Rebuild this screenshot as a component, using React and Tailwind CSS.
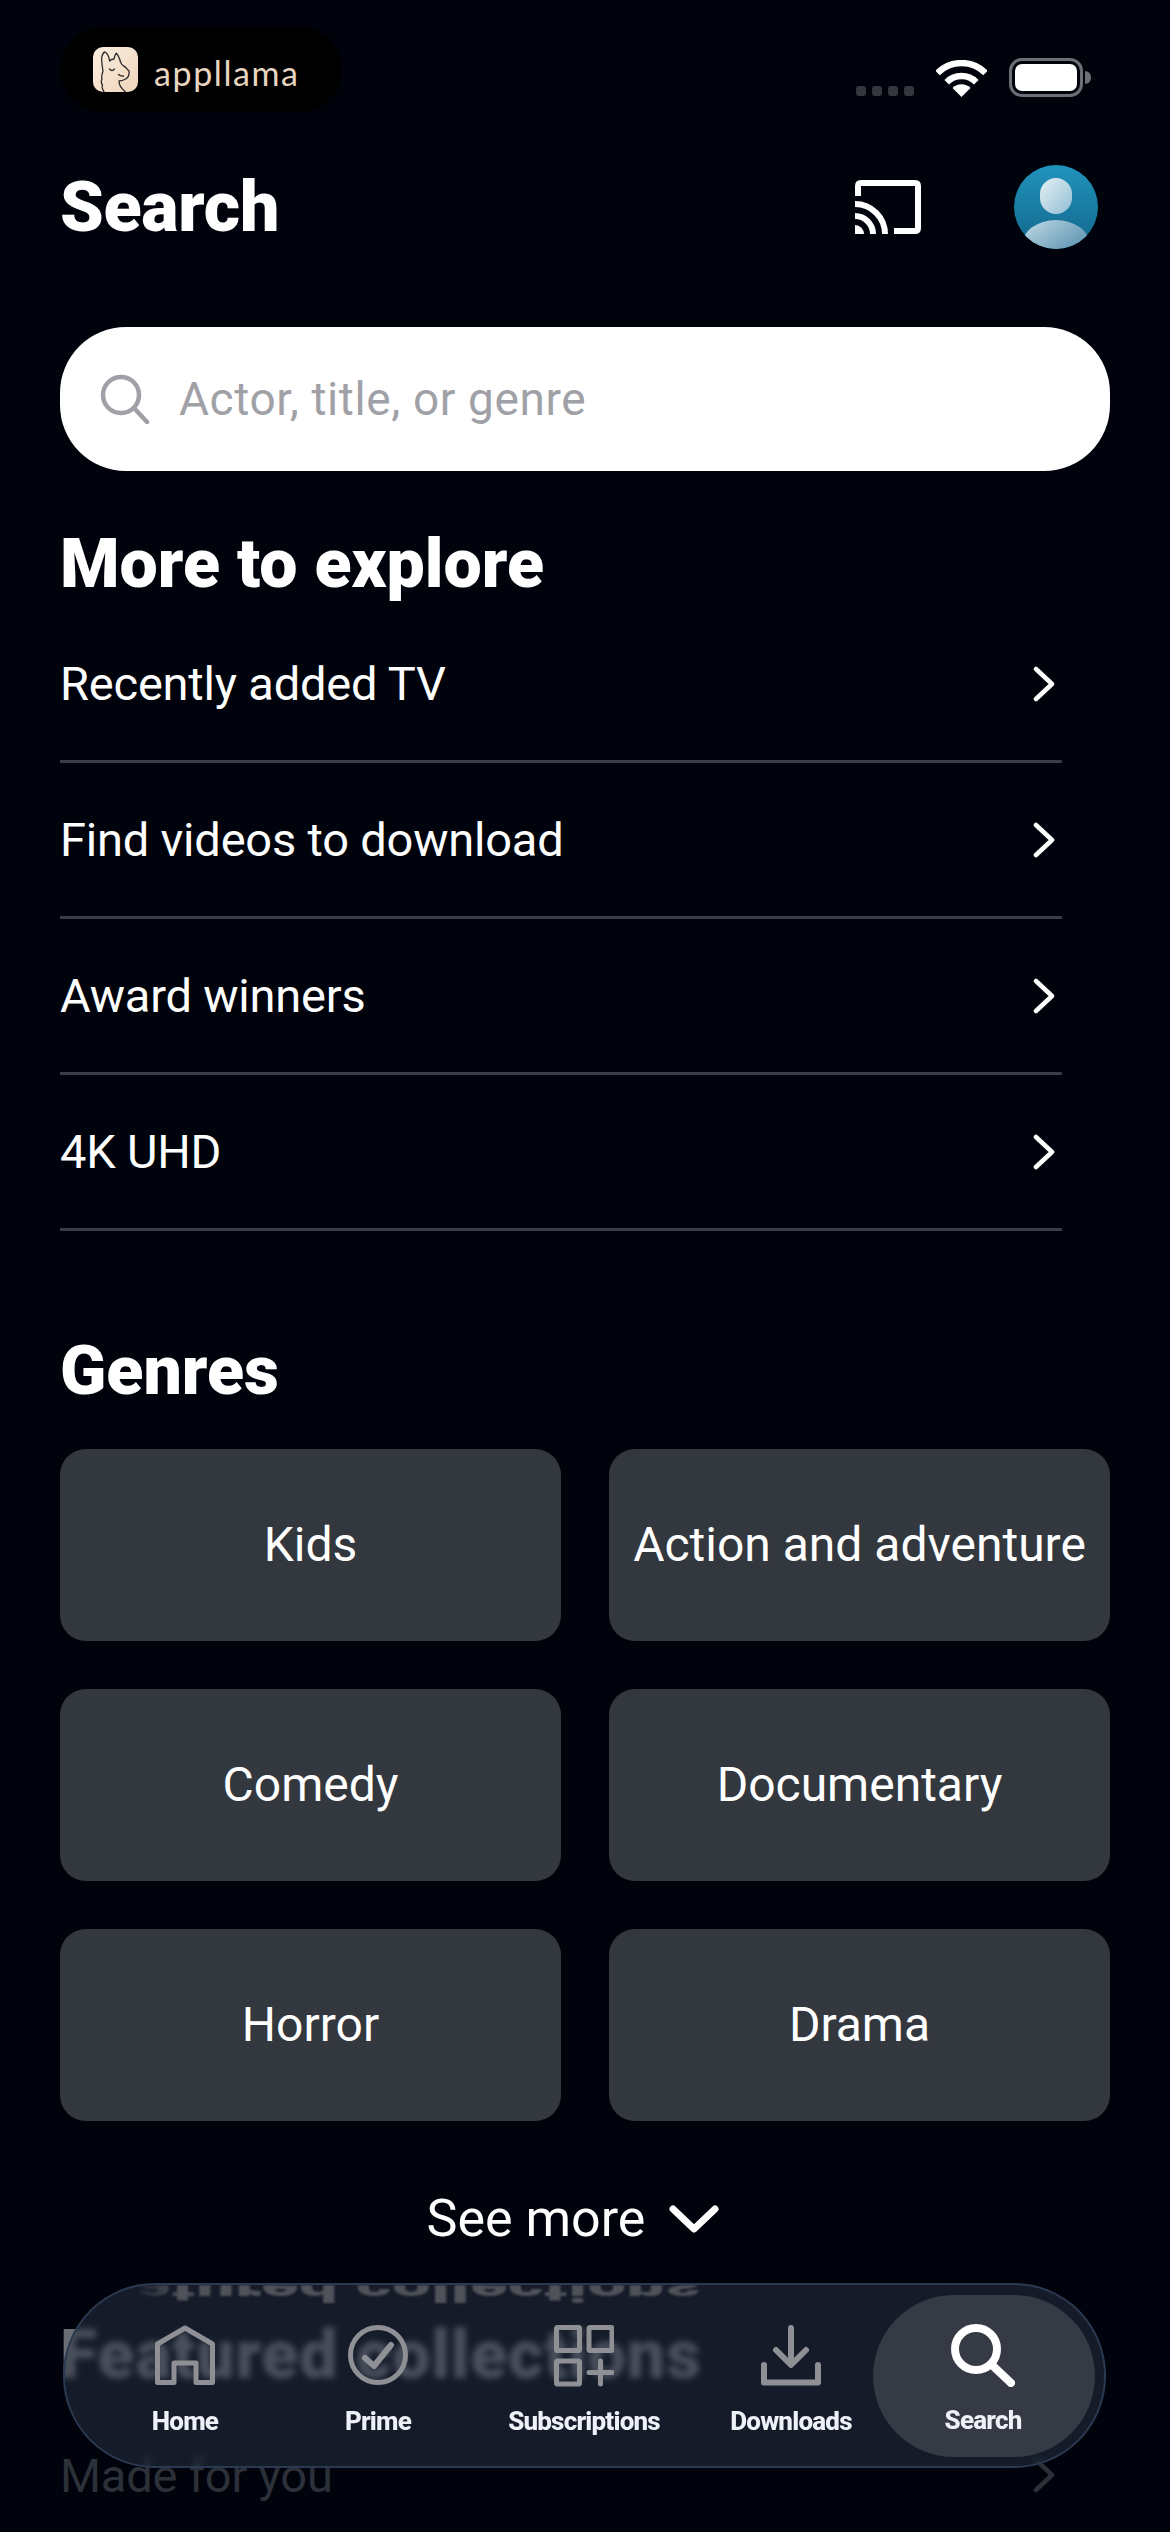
import React from 'react';

const exploreItems = ['Recently added TV', 'Find videos to download', 'Award winners', '4K UHD'];
const genres = ['Kids', 'Action and adventure', 'Comedy', 'Documentary', 'Horror', 'Drama'];

function Chevron({ className = 'stroke-white' }) {
  return (
    <svg width="24" height="36" viewBox="0 0 24 36" fill="none" className={className}>
      <path d="M4 3 L20 18 L4 33" strokeWidth="4.5" strokeLinecap="round" strokeLinejoin="round" />
    </svg>
  );
}

function LlamaLogo() {
  return (
    <div className="flex items-center gap-4 h-[85px] w-[282px] rounded-full bg-black pl-[33px]">
      <div className="w-[45px] h-[45px] rounded-[10px] bg-gradient-to-br from-[#fbeee0] to-[#efd5ba] overflow-hidden">
        <svg width="45" height="45" viewBox="0 0 45 45" fill="none" stroke="#2b2a2a" strokeWidth="1.3" strokeLinecap="round" strokeLinejoin="round">
          <path d="M11 45 C10 42 8 41 9.5 38 C8 36 8 34 9 32 C8 30 9 27 10 24 C9 18 8 12 9 9 C10 6 11 5 12 5 C14 6 16 10 16.6 14 C18 12.5 20 12 21 12 C21.5 9 22.5 7 23.3 6.3 C25 8 26 10 26.6 12 C27 14 28 16 28.6 17 C30 19 33 20 34 22 C36 23.5 36.5 25 36 26 C36 29 34.5 31 32.6 32 C30 33.5 28 34 26 34 C26 37 27.5 41 32.6 45" />
          <path d="M16.5 22 Q19 25 21.5 22" />
          <path d="M30.5 29 Q27.5 29.5 25.5 27.5" />
        </svg>
      </div>
      <span className="font-['Lato',sans-serif] font-normal text-[34px] leading-none tracking-[1.6px] text-[#e8d5c0] mt-[6px]">appllama</span>
    </div>
  );
}

function StatusIcons() {
  return (
    <div className="flex items-end gap-[22px] pt-[31px] pb-[15px]">
      <div className="flex gap-[6px] pb-[1px]">
        {[0, 1, 2, 3].map((i) => (
          <span key={i} className="w-[10px] h-[10px] rounded-[3px] bg-[#33363e]" />
        ))}
      </div>
      <svg width="51" height="37" viewBox="0 0 51 37" fill="none" stroke="white" strokeWidth="6.5">
        <path d="M1.5 13 A34 34 0 0 1 49.5 13" />
        <path d="M10.7 22.2 A21 21 0 0 1 40.3 22.2" />
        <path d="M25.5 37 L16.5 28 A12.7 12.7 0 0 1 34.5 28 Z" fill="white" stroke="none" />
      </svg>
      <div className="flex items-center gap-[2px]">
        <div className="w-[74px] h-[39px] rounded-[13px] border-[3px] border-[#6d6f76] p-[3px]">
          <div className="w-full h-full rounded-[7px] bg-white" />
        </div>
        <div className="w-[6px] h-[13px] rounded-r-full bg-[#6d6f76]" />
      </div>
    </div>
  );
}

function CastIcon() {
  return (
    <svg width="66" height="54" viewBox="0 0 66 54" fill="none" stroke="white" strokeWidth="6">
      <path d="M3 16 V6 Q3 3 6 3 H60 Q63 3 63 6 V48 Q63 51 60 51 H39" />
      <path d="M0 24 A30 30 0 0 1 30 54" />
      <path d="M0 36 A18 18 0 0 1 18 54" />
      <path d="M0 45 A9 9 0 0 1 9 54 H0 Z" fill="white" stroke="none" />
    </svg>
  );
}

function Avatar() {
  return (
    <div className="relative w-[84px] h-[84px] rounded-full overflow-hidden bg-gradient-to-b from-[#2194bd] to-[#13668b]">
      <div className="absolute left-[26px] top-[13px] w-[32px] h-[36px] rounded-[16px] bg-gradient-to-br from-[#e6f1f6] to-[#8fbed3]" />
      <div className="absolute left-[8px] top-[55px] w-[68px] h-[50px] rounded-[50%] bg-gradient-to-br from-[#c3dde8] to-[#32789a]" />
    </div>
  );
}

function NavIcon({ children }) {
  return (
    <svg width="60" height="62" viewBox="0 0 60 62" fill="none" stroke="#8e9096" strokeWidth="5" strokeLinejoin="round" strokeLinecap="round">
      {children}
    </svg>
  );
}

function TabItem({ label, width, children }) {
  return (
    <div className={`flex flex-col items-center ${width}`}>
      {children}
      <span className="mt-[21px] text-[26px] leading-[26px] font-extrabold tracking-[-0.8px] text-[#eef1f8]">{label}</span>
    </div>
  );
}

function TabBar() {
  return (
    <div className="absolute left-[63px] top-[2283px] w-[1043px] h-[185px] rounded-[92px] border-2 border-[#2a3a52] bg-[#2a3446]/50 backdrop-blur-[3px] overflow-hidden">
      {/* mirrored edge of the section heading, refracted by the glass */}
      <div className="absolute left-[-5px] top-0 h-[20px] w-[700px] overflow-hidden blur-[1px] [mask-image:linear-gradient(to_right,transparent_70px,black_120px)]">
        <div className="mt-[21px] origin-top scale-y-[-0.5] text-[68px] leading-none font-black tracking-[0.8px] text-[#4f5259]">Featured collections</div>
      </div>
      <div className="absolute left-[808px] top-[10px] w-[222px] h-[162px] rounded-[81px] bg-[#353a45]" />
      <div className="relative flex h-full pt-[40px] pl-[24px]">
        <TabItem label="Home" width="w-[192px]">
          <NavIcon>
            <path d="M2.5 57.5 V19 L30 3 L57.5 19 V57.5 H41 V38 H19 V57.5 Z" />
          </NavIcon>
        </TabItem>
        <TabItem label="Prime" width="w-[194px]">
          <NavIcon>
            <circle cx="30" cy="30" r="27.5" />
            <path d="M17 33 L26 41 L43 20" strokeWidth="6" />
          </NavIcon>
        </TabItem>
        <TabItem label="Subscriptions" width="w-[218px]">
          <NavIcon>
            <rect x="2.5" y="2.5" width="23" height="23" rx="1" />
            <rect x="35" y="2.5" width="23" height="23" rx="1" />
            <rect x="2.5" y="36" width="23" height="23" rx="1" />
            <path d="M46.5 36 V59 M35 47.5 H58" />
          </NavIcon>
        </TabItem>
        <TabItem label="Downloads" width="w-[196px]">
          <NavIcon>
            <path d="M30 3 V39 M15 25 L30 40 L45 25" strokeWidth="6" />
            <path d="M3 40 V57.5 H57 V40" strokeWidth="6" />
          </NavIcon>
        </TabItem>
        <TabItem label="Search" width="w-[188px]">
          <svg width="64" height="64" viewBox="0 0 64 64" fill="none" stroke="white" strokeWidth="8" strokeLinecap="round" className="-mt-[2px] -mb-[1px]">
            <circle cx="25" cy="26" r="21" />
            <path d="M41 42 L60 60" />
          </svg>
        </TabItem>
      </div>
    </div>
  );
}

export default function App() {
  return (
    <div className="relative h-[2532px] w-[1170px] overflow-hidden bg-[#00030c] text-white font-['Roboto',sans-serif]">
      {/* status row */}
      <div className="flex justify-between items-start pl-[60px] pr-[79px] pt-[27px] h-[112px]">
        <LlamaLogo />
        <StatusIcons />
      </div>

      {/* title row */}
      <div className="flex items-center h-[190px] pl-[60px] pr-[72px]">
        <h1 className="text-[70px] leading-none font-black tracking-[-0.3px] flex-1">Search</h1>
        <CastIcon />
        <div className="ml-[93px]">
          <Avatar />
        </div>
      </div>

      <div className="px-[60px]">
        {/* search field */}
        <div className="flex items-center h-[144px] mt-[25px] rounded-[66px] bg-white pl-[40px]">
          <svg width="50" height="50" viewBox="0 0 50 50" fill="none" stroke="#a0a1a7" strokeWidth="4.5" strokeLinecap="round">
            <circle cx="21" cy="21" r="18" />
            <path d="M34 34 L47 48" />
          </svg>
          <span className="ml-[29px] text-[46px] leading-none font-[450] tracking-[0.6px] text-[#a0a1a7]">Actor, title, or genre</span>
        </div>

        <h2 className="mt-[53px] text-[68px] leading-[80px] font-black">More to explore</h2>

        <div className="w-[1002px] mt-[3px]">
          {exploreItems.map((item) => (
            <div key={item} className="flex items-center justify-between h-[156px] border-b-[3px] border-[#3a3d47]">
              <span className="text-[47px] leading-none tracking-[-0.2px]">{item}</span>
              <span className="mr-[6px]"><Chevron /></span>
            </div>
          ))}
        </div>

        <h2 className="mt-[100px] text-[68px] leading-[80px] font-black">Genres</h2>

        <div className="grid grid-cols-2 gap-[48px] mt-[38px]">
          {genres.map((g) => (
            <div key={g} className="flex items-center justify-center h-[192px] rounded-[26px] bg-[#33373e] text-[48px] leading-none">
              {g}
            </div>
          ))}
        </div>

        <div className="flex items-center justify-center gap-[24px] mt-[70px] h-[56px] pr-[24px]">
          <span className="text-[52px] leading-none">See more</span>
          <svg width="50" height="30" viewBox="0 0 50 30" fill="none" stroke="white" strokeWidth="7" strokeLinecap="round" strokeLinejoin="round">
            <path d="M4 5 L25 25 L46 5" />
          </svg>
        </div>

        {/* section running under the tab bar */}
        <h2 className="mt-[68px] text-[68px] leading-[80px] font-black tracking-[0.8px] text-[#6a6d74]">Featured collections</h2>
        <div className="flex items-center justify-between w-[1002px] mt-[57px] h-[46px] text-[#2c3038]">
          <span className="text-[47px] leading-none tracking-[-0.2px]">Made for you</span>
          <span className="mr-[6px]"><Chevron className="stroke-[#2c3038]" /></span>
        </div>
      </div>

      <TabBar />
    </div>
  );
}
